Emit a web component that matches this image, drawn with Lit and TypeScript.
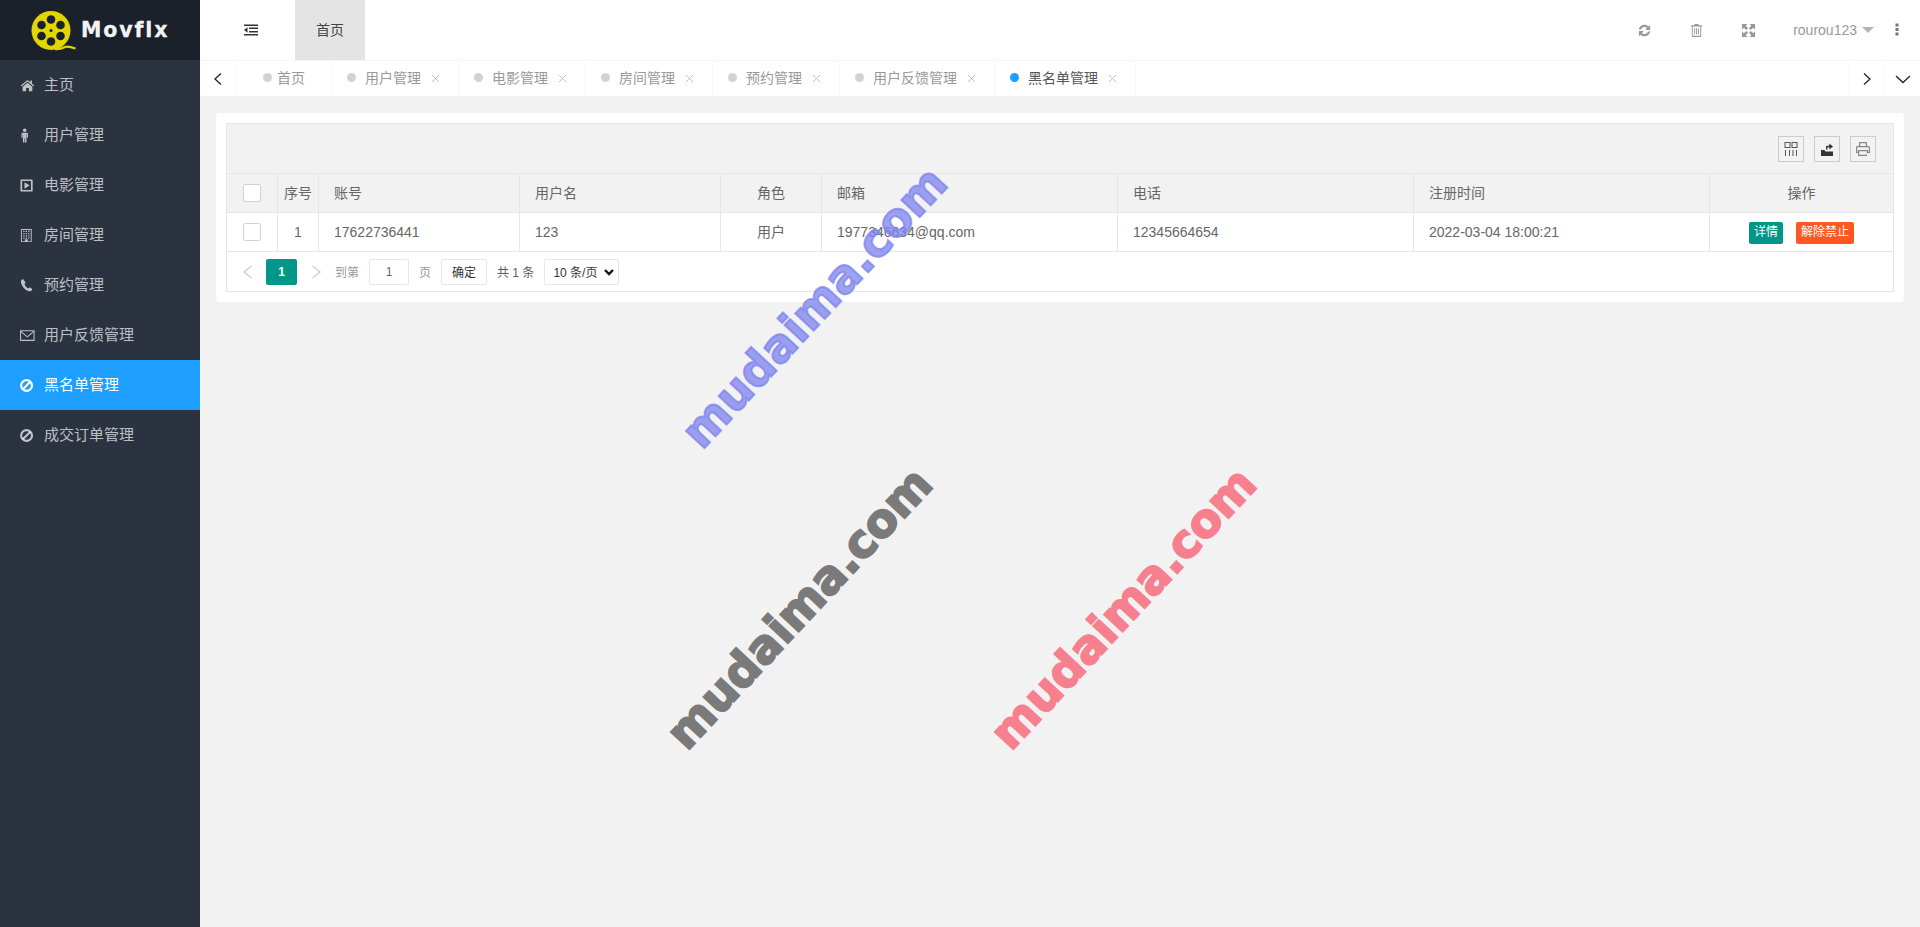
import { LitElement, html, css, svg } from "lit";
import { customElement } from "lit/decorators.js";

const FA: Record<string, unknown> = {
  home: svg`<path d="M8 2 .8 8l.8 1L8 3.600 14.400 9l.8-1-2.500-2.100V2.600h-1.800v1.800Z"/><path d="M2.800 9.400 8 5l5.200 4.400V14H9.500v-3.300h-3V14H2.800Z"/>`,
  male: svg`<circle cx="5" cy="2.400" r="1.900"/><path d="M2.800 5h4.400C7.900 5 8.500 5.600 8.500 6.300V10.500H7.300V6.800H6.900V15.500H5.300V10.800H4.700V15.500H3.100V6.800H2.700V10.500H1.500V6.300C1.500 5.600 2.100 5 2.800 5Z"/>`,
  play: svg`<path fill-rule="evenodd" d="M1.500 1.500h11c.6 0 1 .4 1 1v11c0 .6-.4 1-1 1h-11c-.6 0-1-.4-1-1v-11c0-.6.4-1 1-1Zm.8 1.800v9.400h9.400V3.300Z"/><path d="M4.800 4.600 10.200 8l-5.400 3.400Z"/>`,
  building: svg`<path fill-rule="evenodd" d="M1 1h11.500v14H1Zm1 1v12h3.200v-2h3v2h3.300V2Z"/><path d="M3.500 3h1.400v1.300H3.500Zm2.600 0h1.400v1.300H6.100Zm2.600 0h1.400v1.300H8.700ZM3.500 5.400h1.400v1.300H3.500Zm2.600 0h1.400v1.300H6.100Zm2.600 0h1.400v1.300H8.700ZM3.500 7.800h1.400v1.300H3.500Zm2.600 0h1.400v1.300H6.100Zm2.600 0h1.400v1.300H8.700ZM3.500 10.200h1.400v1.300H3.500Zm2.600 0h1.400v1.300H6.100Zm2.600 0h1.400v1.300H8.700Z"/>`,
  phone: svg`<path d="M3.600 1.600c-.5-.3-1.100-.2-1.600.2C1.200 2.500.8 3.300 1 4.500c.5 3.900 4.400 8.600 8.700 9.500 1.200.2 2.200-.1 3-1 .4-.5.400-1.100 0-1.500l-2-1.300c-.4-.3-.9-.2-1.200.2l-.6.7c-1.800-.5-3.800-3-4.200-4.900l.8-.6c.4-.3.500-.7.300-1.200Z"/>`,
  env: svg`<path fill="none" stroke="currentColor" stroke-width="1.100" d="M.6 3h14.400v10.200H.6Z"/><path fill="none" stroke="currentColor" stroke-width="1.100" d="M.8 3.500 7.800 9.500 14.800 3.500"/>`,
  ban: svg`<circle cx="7" cy="8" r="5.800" fill="none" stroke="currentColor" stroke-width="2.300"/><path stroke="currentColor" stroke-width="2.300" d="M3 12 11 4"/>`,
};

const NAV: [string, string][] = [
  ["home", "主页"], ["male", "用户管理"], ["play", "电影管理"], ["building", "房间管理"],
  ["phone", "预约管理"], ["env", "用户反馈管理"], ["ban", "黑名单管理"], ["ban", "成交订单管理"],
];
const TABS = ["首页", "用户管理", "电影管理", "房间管理", "预约管理", "用户反馈管理", "黑名单管理"];

@customElement("app-root")
export class AppRoot extends LitElement {
  static styles = css`
    :host { display: block; height: 927px; overflow: hidden; position: relative; background: #f2f2f2;
      font-family: "Liberation Sans", "Noto Sans CJK SC", sans-serif; font-size: 14px; color: #666; }
    .app { display: flex; height: 927px; }
    .side { width: 200px; flex: none; background: #2a333f; }
    .logo { height: 60px; background: #1a212b; display: flex; align-items: center; padding-left: 31px; gap: 2px; box-sizing: border-box; }
    .logo svg { display: block; }
    .logo span { color: #fff; font: bold 20.5px "DejaVu Sans", sans-serif; letter-spacing: 1.900px; -webkit-text-stroke: .3px #fff; opacity: .95; }
    .nav { height: 50px; box-sizing: border-box; padding-left: 20px; display: flex; align-items: center; gap: 9px; color: rgba(255,255,255,.7); font-size: 15px; }
    .nav svg { width: 15px; height: 15px; fill: currentColor; flex: none; }
    .nav span { margin-bottom: 3px; }
    .nav.on { background: #1e9fff; color: #fff; }
    .main { flex: 1; min-width: 0; display: flex; flex-direction: column; }
    .head { height: 60px; background: #fff; display: flex; align-items: center; border-bottom: 1px solid #f6f6f6; box-sizing: content-box; }
    .fold { width: 95px; box-sizing: border-box; padding-left: 7px; display: flex; justify-content: center; color: #333; }
    .fold svg { width: 16px; height: 16px; fill: currentColor; }
    .home { width: 70px; height: 60px; box-sizing: border-box; padding-bottom: 2px; background: #e4e4e4; color: #444; display: flex; align-items: center; justify-content: center; }
    .sp { flex: 1; }
    .tool { width: 52px; display: flex; justify-content: center; color: #999; }
    .tool svg { width: 15px; height: 15px; fill: currentColor; }
    .user { color: #999; display: flex; align-items: center; gap: 5px; margin-left: 19px; }
    .caret { width: 0; height: 0; border: 6px solid transparent; border-top-color: #b5b5b5; border-bottom: 0; }
    .more { width: 46px; display: flex; justify-content: center; color: #777; }
    .more svg { width: 16px; height: 16px; fill: currentColor; }
    .tabs { height: 35px; background: #fff; display: flex; align-items: stretch; }
    .arrow { width: 36px; display: flex; align-items: center; justify-content: center; border-right: 1px solid #f6f6f6; color: #222; flex: none; box-sizing: content-box; }
    .arrow.r { border-right: 0; border-left: 1px solid #f6f6f6; width: 34px; }
    .arrow.d { width: 35px; }
    .arrow svg { width: 16px; height: 16px; fill: none; stroke: currentColor; stroke-width: 1.300; }
    .tab { display: flex; align-items: center; box-sizing: border-box; padding-bottom: 3px; border-right: 1px solid #f6f6f6; color: #999; padding-left: 26px; padding-right: 26px; }
    .tab i { width: 9px; height: 9px; border-radius: 50%; background: #d2d2d2; margin-right: 5px; margin-top: 1px; }
    .tab.closable { padding-left: 15px; padding-right: 18px; }
    .tab.closable i { margin-right: 9px; }
    .tab b { font-weight: 400; }
    .tab svg { width: 9px; height: 9px; margin-left: 10px; margin-top: 3px; stroke: #c2c2c2; stroke-width: 1; fill: none; }
    .tab.on { color: #555; }
    .tab.on i { background: #1e9fff; }
    .content { padding: 17px 16px 0; flex: 1; }
    .card { background: #fff; border-radius: 4px; padding: 10px; }
    .tbl { border: 1px solid #e6e6e6; }
    .bar { height: 49px; background: #f2f2f2; border-bottom: 1px solid #e6e6e6; display: flex; align-items: center; justify-content: flex-end; gap: 10px; padding-right: 17px; box-sizing: content-box; }
    .bar span { border: 1px solid #ccc; display: flex; align-items: center; justify-content: center; color: #333; box-sizing: border-box; width: 26px; height: 26px; }
    .bar span.cols { color: #555; }
    .bar span.print { color: #888; }
    .bar svg { width: 16px; height: 16px; fill: currentColor; }
    .row { display: grid; grid-template-columns: 51px 41px 201px 201px 101px 296px 296px 296px 1fr; border-bottom: 1px solid #e6e6e6; height: 38px; box-sizing: content-box; }
    .row.th { background: #f2f2f2; }
    .row > div { display: flex; align-items: center; padding: 0 15px; border-right: 1px solid #e6e6e6; min-width: 0; white-space: nowrap; }
    .row > div:last-child { border-right: 0; }
    .row > .c { justify-content: center; padding: 0; }
    .row.th > div, .row > .up { padding-bottom: 2px; }
    .row.th > .ckc { padding-bottom: 0; }
    .ck { width: 18px; height: 18px; border: 1px solid #d2d2d2; border-radius: 2px; background: #fff; box-sizing: border-box; }
    .btn { height: 22px; line-height: 21px; padding: 0 5px; border-radius: 2px; color: #fff; font-size: 12px; margin-top: 1px; }
    .btn.g { background: #009688; }
    .btn.o { background: #ff5722; margin-left: 13px; }
    .pg { height: 39px; display: flex; align-items: center; padding-left: 14px; font-size: 12px; color: #999; }
    .pg .chev { width: 16px; height: 16px; fill: none; stroke: #d2d2d2; stroke-width: 1.500; }
    .cur { width: 31px; height: 26px; background: #009688; color: #fff; border-radius: 2px; display: flex; align-items: center; justify-content: center; font-weight: bold; margin: 0 12px 0 9px; }
    .to { margin-left: 10px; }
    .inp { width: 40px; height: 26px; border: 1px solid #e6e6e6; border-radius: 2px; display: flex; align-items: center; justify-content: center; color: #666; box-sizing: border-box; margin: 0 10px; }
    .ok { width: 46px; height: 26px; border: 1px solid #e6e6e6; border-radius: 2px; display: flex; align-items: center; justify-content: center; color: #333; box-sizing: border-box; margin-left: 10px; }
    .tot { color: #333; margin: 0 10px; opacity: .8; }
    .sel { width: 75px; height: 26px; border: 1px solid #e6e6e6; border-radius: 2px; display: flex; align-items: center; justify-content: space-between; padding: 0 4px 0 8px; color: #333; box-sizing: border-box; }
    .sel svg { width: 10px; height: 10px; fill: none; stroke: #111; stroke-width: 2.400; }
    .wm { position: absolute; font: bold 46px "DejaVu Sans", sans-serif; -webkit-text-stroke: 2px currentColor; white-space: nowrap; transform: translate(-50%, -50%) rotate(-47deg); pointer-events: none; }
    .wm.a { left: 814px; top: 307px; color: rgba(125,130,238,.75); }
    .wm.b { left: 799px; top: 608px; color: #7a7a7a; }
    .wm.c { left: 1123px; top: 608px; color: #f7808f; }
  `;

  private chev(d: string) { return svg`<path d="${d}"/>`; }

  render() {
    return html`<div class="app">
      <aside class="side">
        <div class="logo">
          <svg width="48" height="60" viewBox="0 0 48 60">
            <circle cx="20" cy="30.500" r="19.500" fill="#e2d600"/>
            <circle cx="20" cy="19.500" r="4.300" fill="#1a212b"/><circle cx="20" cy="41.500" r="4.300" fill="#1a212b"/>
            <circle cx="10.500" cy="25" r="4.300" fill="#1a212b"/><circle cx="29.500" cy="25" r="4.300" fill="#1a212b"/>
            <circle cx="10.500" cy="36" r="4.300" fill="#1a212b"/><circle cx="29.500" cy="36" r="4.300" fill="#1a212b"/>
            <circle cx="20" cy="30.500" r="1.600" fill="#1a212b"/>
            <path d="M24 49c4 .5 7-.5 10-2 3-1 6 0 10.500 1.500" fill="none" stroke="#e2d600" stroke-width="2.300"/>
          </svg>
          <span>Movflx</span>
        </div>
        ${NAV.map(([ic, t], i) => html`<div class="nav ${i === 6 ? "on" : ""}"><svg viewBox="0 0 16 16">${FA[ic]}</svg><span>${t}</span></div>`)}
      </aside>
      <div class="main">
        <header class="head">
          <div class="fold"><svg viewBox="0 0 16 16"><path d="M1 2.500h14V4H1ZM6 5.500h9V7H6ZM6 9h9v1.500H6ZM1 12h14v1.500H1ZM4.500 5.200v5.600L1 8Z"/></svg></div>
          <div class="home">首页</div>
          <div class="sp"></div>
          <div class="tool"><svg viewBox="0 0 16 16"><path d="M1.800 7C2.500 3.800 5 1.800 8 1.800c1.700 0 3.200.6 4.300 1.800L14 2v5.400H8.700l2-2C9.900 4.700 9 4.300 8 4.300 6.200 4.300 4.900 5.400 4.400 7ZM14.200 9c-.7 3.200-3.200 5.200-6.200 5.200-1.700 0-3.200-.6-4.300-1.800L2 14V8.600h5.300l-2 2c.8.700 1.700 1.100 2.700 1.100 1.800 0 3.100-1.100 3.600-2.700Z"/></svg></div>
          <div class="tool"><svg viewBox="0 0 16 16"><path fill-rule="evenodd" d="M6 1h4l.5 1.500H14v1.200h-1v10.200c0 .6-.5 1.100-1.100 1.100H4.100c-.6 0-1.100-.5-1.100-1.100V3.700H2V2.500h3.500Zm-2 2.700v10h8v-10Z"/><path d="M5.500 5.500h1v6.500h-1Zm2 0h1v6.500h-1Zm2 0h1v6.500h-1Z"/></svg></div>
          <div class="tool"><svg viewBox="0 0 16 16"><path d="M1 1h6L5 3l2.500 2.500-2 2L3 5 1 7ZM15 1v6l-2-2-2.500 2.500-2-2L11 3 9 1ZM1 15V9l2 2 2.500-2.500 2 2L5 13l2 2ZM15 15H9l2-2-2.500-2.500 2-2L13 11l2-2Z"/></svg></div>
          <div class="user">rourou123<span class="caret"></span></div>
          <div class="more"><svg viewBox="0 0 16 16"><path d="M6.500 1.500h3v3h-3ZM6.500 6h3v3h-3ZM6.500 10.500h3v3h-3Z"/></svg></div>
        </header>
        <nav class="tabs">
          <div class="arrow"><svg viewBox="0 0 16 16">${this.chev("M11 2.500 5 8l6 5.500")}</svg></div>
          ${TABS.map((t, i) => html`<div class="tab ${i ? "closable" : ""} ${i === 6 ? "on" : ""}"><i></i><b>${t}</b>${i ? html`<svg viewBox="0 0 9 9"><path d="M1 1l7 7M8 1 1 8"/></svg>` : ""}</div>`)}
          <div class="sp"></div>
          <div class="arrow r"><svg viewBox="0 0 16 16">${this.chev("M5 2.500 11 8l-6 5.500")}</svg></div>
          <div class="arrow r d"><svg viewBox="0 0 16 16">${this.chev("M1 5l7 6.500L15 5")}</svg></div>
        </nav>
        <main class="content">
          <section class="card"><div class="tbl">
            <div class="bar">
              <span class="cols"><svg viewBox="0 0 16 16"><path fill-rule="evenodd" d="M1.500 1h6v6h-6Zm1 1v4h4V2ZM8.500 1h6v6h-6Zm1 1v4h4V2Z"/><path d="M2 9h1v6H2ZM6 9h1v6H6ZM9.500 9h1v6h-1ZM13 9h1v6h-1Z"/></svg></span>
              <span><svg viewBox="0 0 16 16"><path d="M2 9h3.500l1 1.500H14V15H2Z"/><path d="M7 8.500V6c0-.8.500-1.300 1.300-1.300h2V2.500L14 5.500l-3.700 3V6.300H8.500V8.500Z"/></svg></span>
              <span class="print"><svg viewBox="0 0 16 16"><path fill-rule="evenodd" d="M4 1h8v4h1.500c.8 0 1.500.7 1.500 1.500V12h-3v3H3v-3H1V6.500C1 5.700 1.700 5 2.500 5H4Zm1.200 1.200V5h5.600V2.200ZM2.200 6.200v4.600H3V9h10v1.800h.8V6.200ZM4.200 10.200v3.600h7.600v-3.600Z"/></svg></span>
            </div>
            <div class="row th">
              <div class="c ckc"><span class="ck"></span></div><div class="c">序号</div><div>账号</div><div>用户名</div><div class="c">角色</div><div>邮箱</div><div>电话</div><div>注册时间</div><div class="c">操作</div>
            </div>
            <div class="row">
              <div class="c"><span class="ck"></span></div><div class="c">1</div><div>17622736441</div><div>123</div><div class="c up">用户</div><div>1977346634@qq.com</div><div>12345664654</div><div>2022-03-04 18:00:21</div>
              <div class="c"><span class="btn g">详情</span><span class="btn o">解除禁止</span></div>
            </div>
            <div class="pg">
              <svg class="chev" viewBox="0 0 16 16"><path d="M10.500 2 3 8l7.500 6"/></svg>
              <span class="cur">1</span>
              <svg class="chev" viewBox="0 0 16 16"><path d="M3.500 2 11 8l-7.500 6"/></svg>
              <span class="to">到第</span><span class="inp">1</span><span>页</span><span class="ok">确定</span>
              <span class="tot">共 1 条</span>
              <span class="sel">10 条/页<svg viewBox="0 0 10 10"><path d="M1 3l4 4 4-4"/></svg></span>
            </div>
          </div></section>
        </main>
      </div>
    </div>
    <div class="wm a">mudaima.com</div>
    <div class="wm b">mudaima.com</div>
    <div class="wm c">mudaima.com</div>`;
  }
}
